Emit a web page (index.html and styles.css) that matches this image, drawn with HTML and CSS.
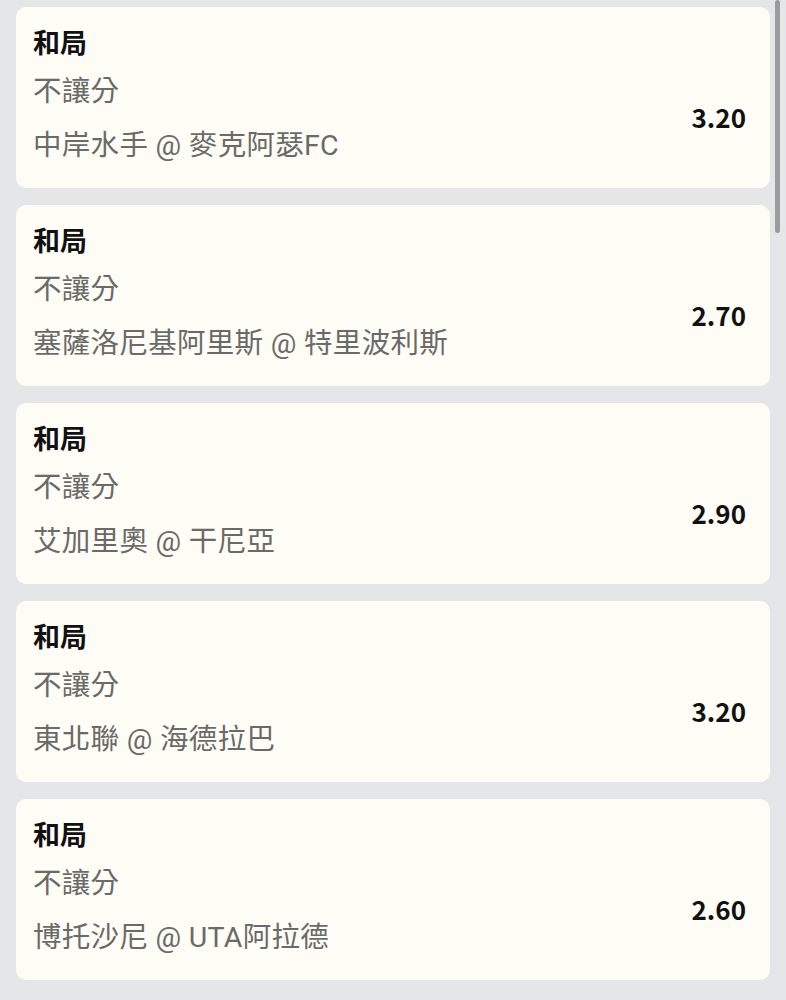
FILE: index.html
```html
<!DOCTYPE html>
<html lang="zh-Hant">
<head>
<meta charset="utf-8">
<title>和局</title>
<link rel="stylesheet" href="styles.css">
</head>
<body>
<div class="list">
  <div class="card">
    <div class="title">和局</div>
    <div class="row">
      <div class="info">
        <div class="sub">不讓分</div>
        <div class="match">中岸水手 @ 麥克阿瑟FC</div>
      </div>
      <div class="odds">3.20</div>
    </div>
  </div>
  <div class="card">
    <div class="title">和局</div>
    <div class="row">
      <div class="info">
        <div class="sub">不讓分</div>
        <div class="match">塞薩洛尼基阿里斯 @ 特里波利斯</div>
      </div>
      <div class="odds">2.70</div>
    </div>
  </div>
  <div class="card">
    <div class="title">和局</div>
    <div class="row">
      <div class="info">
        <div class="sub">不讓分</div>
        <div class="match">艾加里奧 @ 干尼亞</div>
      </div>
      <div class="odds">2.90</div>
    </div>
  </div>
  <div class="card">
    <div class="title">和局</div>
    <div class="row">
      <div class="info">
        <div class="sub">不讓分</div>
        <div class="match">東北聯 @ 海德拉巴</div>
      </div>
      <div class="odds">3.20</div>
    </div>
  </div>
  <div class="card">
    <div class="title">和局</div>
    <div class="row">
      <div class="info">
        <div class="sub">不讓分</div>
        <div class="match">博托沙尼 @ UTA阿拉德</div>
      </div>
      <div class="odds">2.60</div>
    </div>
  </div>
</div>
<div class="scrollbar"></div>
</body>
</html>
```

FILE: styles.css
```css
html, body {
  margin: 0;
  padding: 0;
  background: #e5e6e8;
  font-family: "Noto Sans CJK TC", "Noto Sans", sans-serif;
}

.list {
  display: flex;
  flex-direction: column;
  gap: 17px;
  padding: 7px 16px 20px;
}

.card {
  background: #fdfdf6;
  border-radius: 10px;
  height: 181px;
  box-sizing: border-box;
  padding: 15px 24px 21px 17px;
  display: flex;
  flex-direction: column;
}

.title {
  font-size: 27px;
  font-weight: 700;
  line-height: 40px;
  color: #111111;
}

.row {
  margin-top: 10px;
  display: flex;
  align-items: center;
  justify-content: space-between;
}

.info {
  display: flex;
  flex-direction: column;
  gap: 14px;
}

.sub, .match {
  font-family: "Roboto", "Noto Sans CJK TC", sans-serif;
  font-size: 28.5px;
  line-height: 40px;
  letter-spacing: 0.3px;
  color: #6a6a68;
}

.odds {
  font-size: 26px;
  font-weight: 700;
  color: #111111;
  margin-top: -6px;
}

.scrollbar {
  position: fixed;
  top: 0;
  right: 6px;
  width: 5px;
  height: 233px;
  border-radius: 3px;
  background: #9c9c9c;
}
```
